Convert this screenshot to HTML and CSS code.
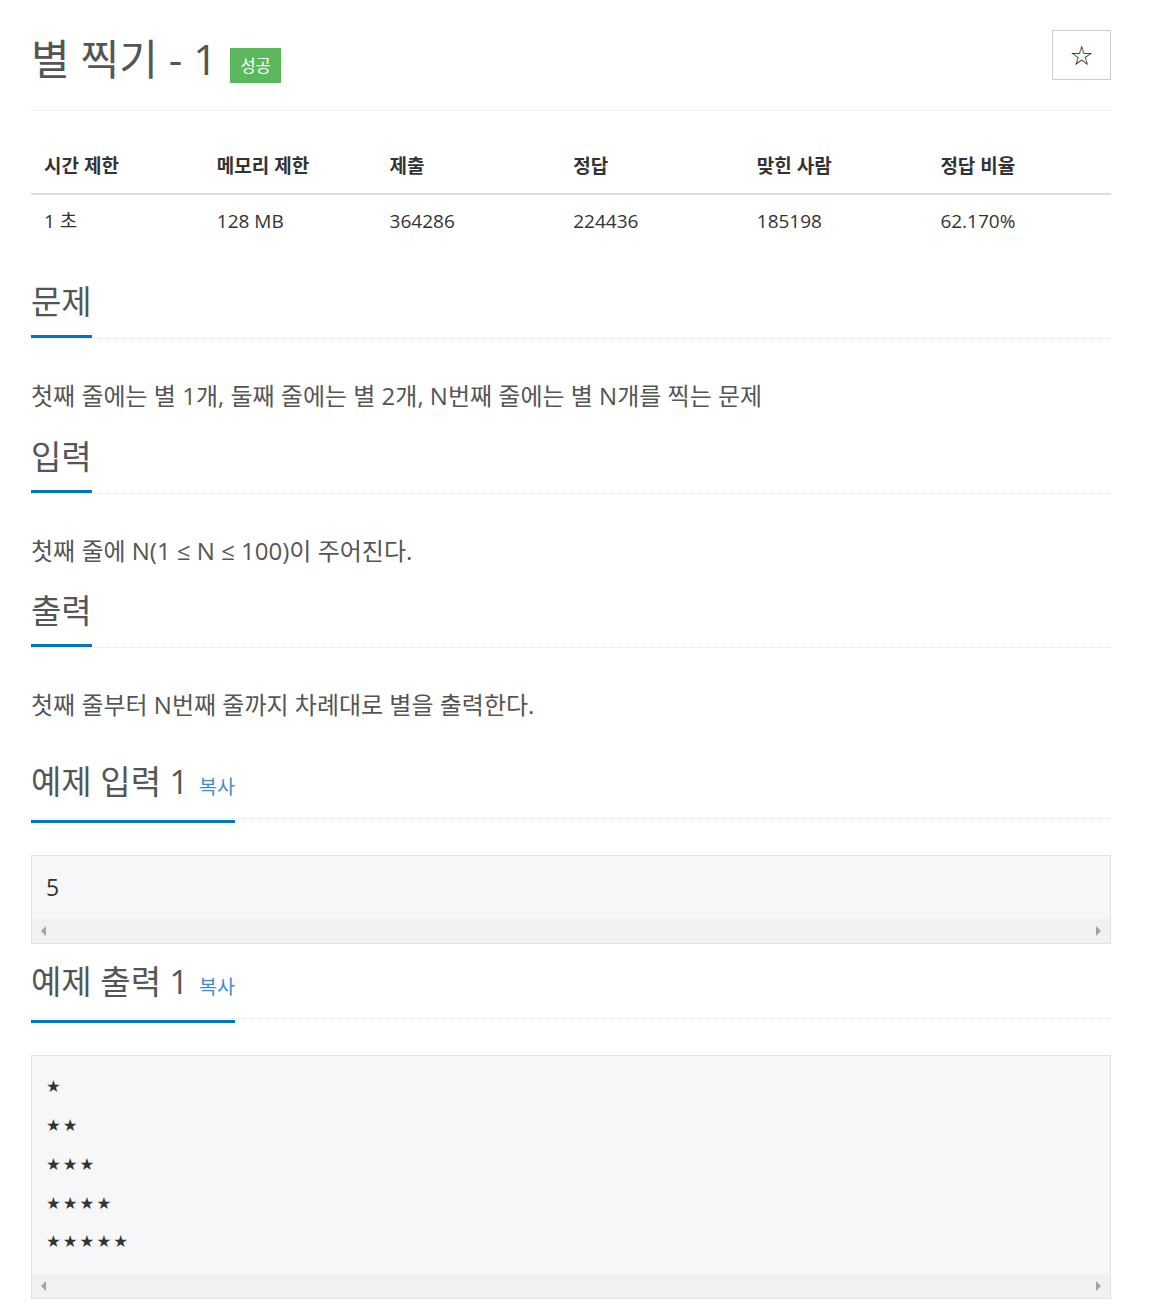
FILE: index.html
```html
<!DOCTYPE html>
<html lang="ko">
<head>
    <meta charset="UTF-8">
    <meta name="viewport" content="width=device-width, initial-scale=1.0">
    <title>별 찍기 - 1</title>
    <link rel="stylesheet" href="styles.css">
</head>
<body>
    <div class="wrap">
        <div class="page-header">
            <h1>
                <span class="title">별 찍기 - 1</span>
                <span class="label-ok">성공</span>
            </h1>
            <button class="fav">☆</button>
        </div>

        <table class="info">
            <thead>
                <tr>
                    <th class="w16">시간 제한</th>
                    <th class="w16">메모리 제한</th>
                    <th>제출</th>
                    <th>정답</th>
                    <th>맞힌 사람</th>
                    <th>정답 비율</th>
                </tr>
            </thead>
            <tbody>
                <tr>
                    <td>1 초</td>
                    <td>128 MB</td>
                    <td>364286</td>
                    <td>224436</td>
                    <td>185198</td>
                    <td>62.170%</td>
                </tr>
            </tbody>
        </table>

        <div class="section">
            <div class="headline"><h2>문제</h2></div>
            <p class="text">첫째 줄에는 별 1개, 둘째 줄에는 별 2개, N번째 줄에는 별 N개를 찍는 문제</p>
        </div>

        <div class="section">
            <div class="headline"><h2>입력</h2></div>
            <p class="text">첫째 줄에 N(1 ≤ N ≤ 100)이 주어진다.</p>
        </div>

        <div class="section">
            <div class="headline"><h2>출력</h2></div>
            <p class="text">첫째 줄부터 N번째 줄까지 차례대로 별을 출력한다.</p>
        </div>

        <div class="section sample">
            <div class="headline"><h2>예제 입력 1 <a class="copy" href="#">복사</a></h2></div>
            <div class="sampledata">
                <pre class="input">5</pre>
                <div class="hscroll"><span class="arr-l"></span><span class="arr-r"></span></div>
            </div>
        </div>

        <div class="section sample">
            <div class="headline"><h2>예제 출력 1 <a class="copy" href="#">복사</a></h2></div>
            <div class="sampledata">
                <pre class="stars">★
★★
★★★
★★★★
★★★★★</pre>
                <div class="hscroll"><span class="arr-l"></span><span class="arr-r"></span></div>
            </div>
        </div>
    </div>
</body>
</html>
```

FILE: styles.css
```css
body{
    margin: 0;
    font-family: "Open Sans", "Noto Sans CJK KR", sans-serif;
    color: #555;
    background: #fff;
}
.wrap{
    width: 1080px;
    padding: 0 0 0 31px;
}
.page-header{
    display: flex;
    justify-content: space-between;
    align-items: flex-start;
    padding-top: 30px;
    height: 80px;
    border-bottom: 1px solid #eee;
}
.page-header h1{
    margin: 0;
    display: flex;
    align-items: center;
    font-weight: normal;
    height: 52px;
}
.title{
    font-size: 42px;
    color: #555;
}
.label-ok{
    margin-left: 13px;
    margin-top: 18px;
    background-color: #5cb85c;
    color: #fff;
    font-size: 16.5px;
    width: 51px;
    height: 35px;
    line-height: 35px;
    text-align: center;
}
.fav{
    width: 59px;
    height: 50px;
    background: #fff;
    border: 1px solid #ccc;
    font-size: 27px;
    line-height: 1;
    color: #222;
    font-family: "DejaVu Sans", sans-serif;
    padding: 0;
}
.info{
    width: 100%;
    border-collapse: collapse;
    margin-top: 29px;
    font-size: 19px;
    color: #333;
}
.info th{
    text-align: left;
    font-weight: bold;
    line-height: 25px;
    padding: 14px 13px;
    border-bottom: 2px solid #ddd;
    width: 17%;
}
.info th.w16{
    width: 16%;
}
.info td{
    line-height: 25px;
    padding: 14px 13px;
}
.section{
    margin-top: 34px;
}
.section + .section{
    margin-top: 22px;
}
.section.sample{
    margin-top: 38px;
}
.sample + .sample{
    margin-top: 18px;
}
.headline{
    border-bottom: 1px dotted #dfe3ea;
    height: 56px;
}
.headline h2{
    display: inline-block;
    margin: 0;
    font-size: 33px;
    font-weight: normal;
    line-height: 40px;
    padding-bottom: 13px;
    border-bottom: 3px solid #0076c0;
    color: #555;
}
.copy{
    font-size: 19.5px;
    color: #428bca;
    text-decoration: none;
    margin-left: 2px;
}
.text{
    margin: 38px 0 0 0;
    font-size: 24px;
    line-height: 37.5px;
}
.sampledata{
    margin-top: 36px;
    border: 1px solid #e1e1e8;
    background-color: #f7f7f9;
}
.sampledata pre{
    margin: 0;
    padding: 12px 14px;
    font-family: "Open Sans", sans-serif;
    font-size: 23px;
    line-height: 38.75px;
    color: #333;
}
.sampledata pre.input{
    padding-bottom: 13px;
}
.sampledata pre.stars{
    font-family: "DejaVu Sans", sans-serif;
    font-size: 16.5px;
    letter-spacing: 2px;
}
.hscroll{
    height: 24px;
    background-color: #f1f1f1;
    display: flex;
    justify-content: space-between;
    align-items: center;
    padding: 0 9px;
}
.arr-l{
    width: 0;
    height: 0;
    border-top: 5px solid transparent;
    border-bottom: 5px solid transparent;
    border-right: 5px solid #a3a3a3;
}
.arr-r{
    width: 0;
    height: 0;
    border-top: 5px solid transparent;
    border-bottom: 5px solid transparent;
    border-left: 5px solid #a3a3a3;
}
```
